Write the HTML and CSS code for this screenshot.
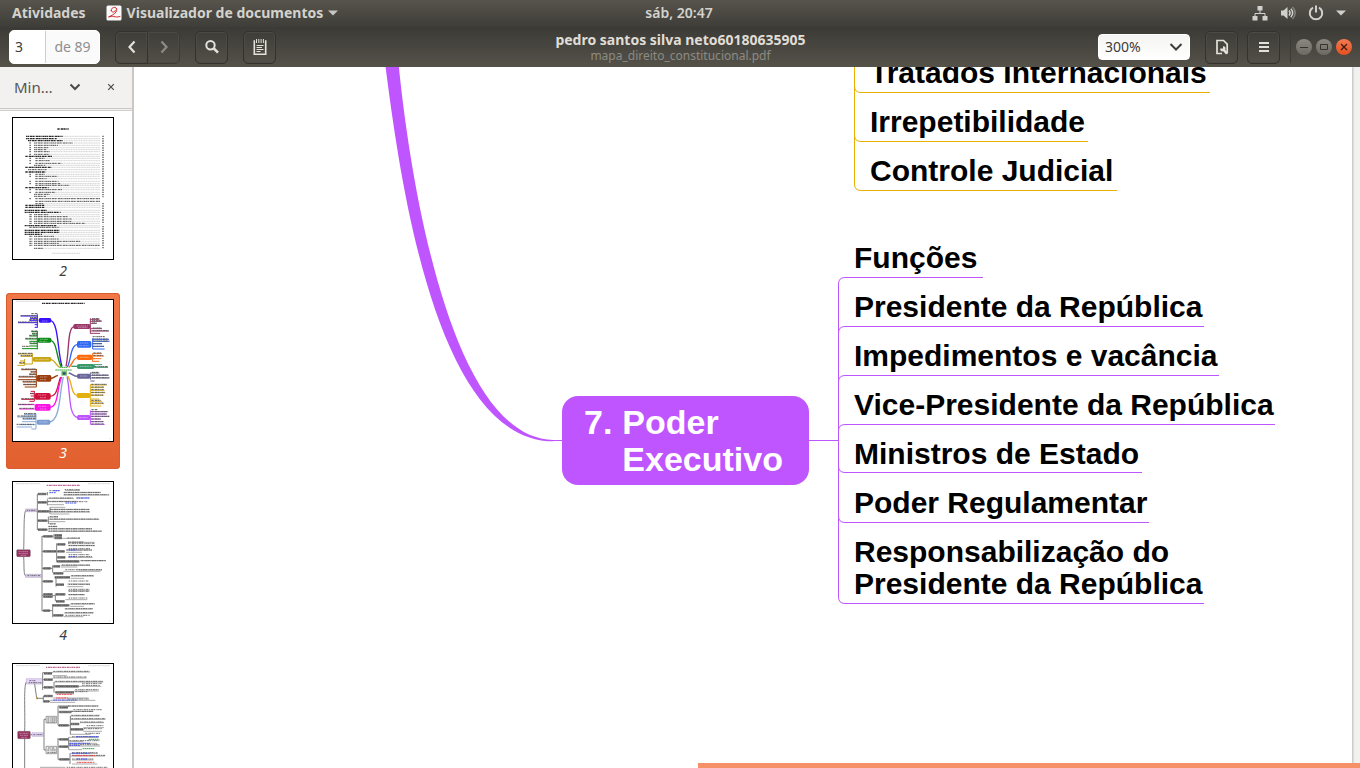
FILE: index.html
```html
<!DOCTYPE html>
<html lang="pt-BR">
<head>
<meta charset="utf-8">
<title>mapa_direito_constitucional.pdf</title>
<link rel="stylesheet" href="styles.css">
</head>
<body>
<header class="topbar">
  <div class="topbar-left">
    <button class="bar-item" type="button">Atividades</button>
    <button class="bar-item app-menu" type="button">
      <svg class="app-icon" width="16" height="16" viewBox="0 0 16 16" aria-hidden="true"><rect x=".5" y=".5" width="15" height="15" rx="1.500" fill="#fafafa"/><path d="M5.200 5.800C5 3.300 7 2.200 8.800 2.400C11 2.700 11.300 5 10 7C8.500 9.200 5.500 10.800 2.800 11.800M5.200 5.800C6 8 9 7.400 9.300 5.500M3 12C6 9.800 9 13.200 14 11.500" fill="none" stroke="#d8242e" stroke-linecap="round"/></svg>
      <span>Visualizador de documentos</span>
      <svg width="10" height="6" viewBox="0 0 10 6" aria-hidden="true"><path d="M0 .5H10L5 5.500Z" fill="#c8c6c2"/></svg>
    </button>
  </div>
  <button class="bar-item clock" type="button">sáb, 20:47</button>
  <button class="bar-item tray" type="button" aria-label="Sistema">
    <svg width="16" height="16" viewBox="0 0 16 16" aria-hidden="true"><path d="M5.500 1h5v4.500h-5zM.5 11h5v4.500h-5zM10.500 11h5v4.500h-5z" fill="#d2d0cc"/><path d="M8 5v3.500M3 11.500V8.500H13V11.500" fill="none" stroke="#d2d0cc"/></svg>
    <svg width="16" height="16" viewBox="0 0 16 16" aria-hidden="true"><path d="M1 5.500H3.500L7.500 2V14L3.500 10.500H1Z" fill="#d2d0cc"/><path d="M9 5.500C10.300 7 10.300 9 9 10.500" fill="none" stroke="#d2d0cc" stroke-width="1.500"/><path d="M10.800 3.800C13 6.300 13 9.700 10.800 12.200" fill="none" stroke="#d2d0cc" stroke-width="1.500"/><path d="M12.500 2C16 5.500 16 10.500 12.500 14" fill="none" stroke="#84827c" stroke-width="1.500"/></svg>
    <svg width="16" height="16" viewBox="0 0 16 16" aria-hidden="true"><path d="M5 2.700A6.200 6.200 0 1 0 11 2.700" fill="none" stroke="#d2d0cc" stroke-width="2"/><path d="M8 .5V7.500" stroke="#d2d0cc" stroke-width="2"/></svg>
    <svg width="10" height="6" viewBox="0 0 10 6" aria-hidden="true"><path d="M0 .5H10L5 5.500Z" fill="#d2d0cc"/></svg>
  </button>
</header>

<div class="headerbar">
  <div class="tools">
    <div class="page-box">
      <input class="page-input" type="text" value="3" aria-label="Página">
      <span class="page-total">de 89</span>
    </div>
    <div class="nav-group">
      <button class="tool" type="button" aria-label="Página anterior"><svg width="16" height="16" viewBox="0 0 16 16"><path d="M10.500 2.500L5.500 8L10.500 13.500" fill="none" stroke="#e4e1d8" stroke-width="2.200"/></svg></button>
      <button class="tool tool-next" type="button" aria-label="Próxima página" disabled><svg width="16" height="16" viewBox="0 0 16 16"><path d="M5.500 2.500L10.500 8L5.500 13.500" fill="none" stroke="#8d8b83" stroke-width="2.200"/></svg></button>
    </div>
    <button class="tool" type="button" aria-label="Localizar"><svg width="16" height="16" viewBox="0 0 16 16"><circle cx="6.500" cy="6.200" r="4.200" fill="none" stroke="#e4e1d8" stroke-width="2"/><path d="M9.500 9.200L14 13.700" stroke="#e4e1d8" stroke-width="2.600"/></svg></button>
    <button class="tool" type="button" aria-label="Anotações"><svg width="16" height="18" viewBox="0 0 16 18"><path d="M3 3H2.300V16.200H13.700V3H13" fill="none" stroke="#e4e1d8" stroke-width="1.600"/><path d="M4.500 1V5M6.800 1V5M9.100 1V5M11.400 1V5" stroke="#e4e1d8"/><path d="M4.500 7.500H11.500M4.500 9.500H10M4.500 11.500H11.500M4.500 13.500H8.500" stroke="#e4e1d8"/></svg></button>
  </div>
  <div class="titles">
    <h1 class="title">pedro santos silva neto60180635905</h1>
    <p class="subtitle">mapa_direito_constitucional.pdf</p>
  </div>
  <div class="tools tools-end">
    <div class="zoom-box">
      <select class="zoom-select" aria-label="Zoom"><option>300%</option></select>
      <svg class="zoom-arrow" width="14" height="10" viewBox="0 0 14 10" aria-hidden="true"><path d="M1.500 2L7 7.500L12.500 2" fill="none" stroke="#3c3c3c" stroke-width="2"/></svg>
    </div>
    <div class="pair">
      <button class="tool" type="button" aria-label="Opções do arquivo"><svg width="16" height="16" viewBox="0 0 16 16"><path d="M8 14.500H3V1.500H9.500L13.200 5.200V14.500" fill="none" stroke="#e4e1d8" stroke-width="1.700"/><path d="M9 7.200V9.500H6.200C6 12 7.500 12.800 9.300 12.300L12 15.500L14 13.800L11.300 10.800C12.300 8.800 11 7 9 7.200Z" fill="#e4e1d8"/></svg></button>
      <button class="tool" type="button" aria-label="Menu"><svg width="16" height="16" viewBox="0 0 16 16"><path d="M3 4H13M3 8H13M3 12H13" stroke="#e4e1d8" stroke-width="2"/></svg></button>
    </div>
    <div class="window-buttons">
      <button class="wbtn" type="button" aria-label="Minimizar"><svg width="8" height="8" viewBox="0 0 8 8"><path d="M0 4.500H8" stroke="#35342f"/></svg></button>
      <button class="wbtn" type="button" aria-label="Maximizar"><svg width="8" height="8" viewBox="0 0 8 8"><path d="M.5 1.500H7.500V6.500H.5Z" fill="none" stroke="#35342f"/></svg></button>
      <button class="wbtn wbtn-close" type="button" aria-label="Fechar"><svg width="8" height="8" viewBox="0 0 8 8"><path d="M1 1L7 7M7 1L1 7" stroke="#3a1a0e" stroke-width="1.200"/></svg></button>
    </div>
  </div>
</div>

<div class="workspace">
  <aside class="sidebar">
    <div class="side-head">
      <button class="side-combo" type="button">Min…<svg width="12" height="8" viewBox="0 0 12 8" aria-hidden="true"><path d="M1.500 1.500L6 6L10.500 1.500" fill="none" stroke="#4a4a48" stroke-width="2"/></svg></button>
      <button class="side-close" type="button" aria-label="Fechar painel"><svg width="8" height="8" viewBox="0 0 8 8"><path d="M1.200 1.200L6.800 6.800M6.800 1.200L1.200 6.800" stroke="#4a4a48" stroke-width="1.200"/></svg></button>
    </div>
    <ol class="thumbs">
      <li class="thumb">
        <svg class="sheet" viewBox="39 39 300 423" aria-hidden="true">
          <path class="leader" d="M190 94H300M172 101H300M192 107H300M222 114H300M176 121H300M148 128H300M142 134H300M152 140H300M150 148H300M158 154H300M136 160H300M152 167H300M186 175H300M138 181H300M156 187H300M142 194H300M138 201H300M138 208H300M174 214H300M142 221H300M178 229H300M184 236H300M210 241H300M148 248H300M188 254H300M168 262H300M152 268H300M140 274H300M132 296H300M136 301H300M136 307H300M142 316H300M184 322H300M148 329H300M206 335H300M218 342H300M216 349H300M258 355H300M172 362H300M180 367H300M182 376H300M182 382H300M128 388H300M164 394H300M178 402H300M244 409H300M178 415H300M134 430H300M156 445H240"/>
          <path class="micro" d="M102 114H218M102 121H174M102 128H146M102 134H140M102 140H150M102 148H148M106 160H134M106 167H150M106 175H184M102 181H136M84 194H140M106 208H136M106 214H172M106 221H140M106 229H176M106 236H182M106 241H208M106 254H186M106 262H166M102 268H150M102 274H138M106 281H300M106 289H300M106 296H130M102 329H146M102 335H204M102 342H216M102 349H214M102 355H256M88 367H178M102 394H162M102 402H176M102 409H242M102 415H176M102 421H300M102 430H132M88 114H94M88 121H94M88 128H94M88 134H94M88 140H94M88 148H94M88 160H94M88 167H94M88 175H94M88 208H94M88 214H94M88 229H94M88 236H94M88 254H94M88 262H94M88 281H94M88 329H96M88 335H96M88 342H96M88 349H96M88 355H96M88 394H98M88 402H98M88 409H98M88 415H98M88 421H98"/>
          <path class="micro strong" d="M172 72H206M78 94H188M78 101H170M84 107H190M76 154H156M76 187H154M76 201H136M76 248H146M76 301H134M76 307H134M74 316H140M74 322H182M74 362H170M74 376H180M74 382H180M74 388H126"/>
          <path class="numbers" d="M309 92V277M309 294V358M309 363V432"/>
        </svg>
        <span class="thumb-label">2</span>
      </li>
      <li class="thumb thumb-current">
        <svg class="sheet" viewBox="39 45 300 423" aria-hidden="true">
          <path class="leader" d="M48 49H120"/><path class="micro strong" d="M126 55H254"/>
          <g fill="none" stroke-width="4">
            <path stroke="#3a10ff" d="M150 106C176 108 172 200 186 244"/><path stroke="#0b8a14" d="M150 166C172 168 168 216 184 246"/><path stroke="#c9a414" d="M150 223C166 224 168 244 180 247"/><path stroke="#9a3c0c" d="M150 280C164 280 164 272 174 272"/><path stroke="#d0103c" d="M150 334C174 332 172 300 182 276"/><path stroke="#fb12e4" d="M150 367C176 364 170 310 185 276"/><path stroke="#8cabd8" d="M148 411C182 408 178 320 190 276"/>
            <path stroke="#9a3568" d="M222 125C202 128 208 200 198 244"/><path stroke="#2f68f4" d="M234 178C210 180 214 226 202 246"/><path stroke="#ff6a0c" d="M234 217C218 218 218 240 206 247"/><path stroke="#38986a" d="M234 244H214"/><path stroke="#686499" d="M234 274C218 274 218 266 206 264"/><path stroke="#e3b012" d="M234 332C212 330 218 296 204 274"/><path stroke="#bf55ff" d="M234 398C204 394 212 320 201 274"/>
          </g>
          <g>
            <rect x="116" y="99" width="38" height="14" rx="5" fill="#3a10ff"/><rect x="112" y="158" width="42" height="15" rx="5" fill="#0b8a14"/><rect x="98" y="216" width="56" height="14" rx="5" fill="#c9a414"/><rect x="110" y="270" width="44" height="20" rx="5" fill="#9a3c0c"/><rect x="104" y="324" width="48" height="20" rx="5" fill="#d0103c"/><rect x="104" y="357" width="48" height="20" rx="5" fill="#fb12e4"/><rect x="110" y="404" width="41" height="15" rx="5" fill="#7a9bd0"/>
            <rect x="220" y="117" width="51" height="15" rx="5" fill="#9a3568"/><rect x="231" y="168" width="43" height="20" rx="5" fill="#2f68f4"/><rect x="231" y="209" width="46" height="16" rx="5" fill="#ff6a0c"/><rect x="231" y="237" width="52" height="15" rx="5" fill="#38986a"/><rect x="231" y="266" width="40" height="15" rx="5" fill="#686499"/><rect x="230" y="324" width="41" height="15" rx="5" fill="#e3b012"/><rect x="231" y="390" width="40" height="15" rx="5" fill="#bf55ff"/>
          </g>
          <path class="micro light" d="M126 108H142M120 163H144M118 169H140M106 223H146M120 276H142M120 284H138M114 330H140M120 338H138M114 364H140M120 372H140M118 411H142M230 123H264M234 128H262M240 174H266M238 182H268M240 217H268M240 244H274M240 273H262M238 398H262"/>
          <g fill="none" stroke-width="3">
            <path stroke="#3a10ff" d="M112 88V128M62 93H112M90 100H112M88 106H112M54 113H112M104 119H112M104 127H112"/>
            <path stroke="#0b8a14" d="M112 138V193M94 140H112M96 147H112M88 153H112M76 162H112M88 169H112M90 176H112M88 183H112M66 191H112"/>
            <path stroke="#c9a414" d="M97 205V237M54 207H97M62 214H97M74 222V240M60 228H74M58 235H74M52 241H74M74 237H97"/>
            <path stroke="#9a3c0c" d="M109 252V306M64 254H109M92 261H109M88 268H109M56 276H109M54 284H109M68 291H109M70 299H109M74 306H109"/>
            <path stroke="#d0103c" d="M103 318V348M92 319H103M90 326H103M92 333H103M64 343H103M88 349H103"/>
            <path stroke="#fb12e4" d="M54 359H104M58 372H104"/>
            <path stroke="#8cabd8" d="M108 386V432M72 388H108M68 394H108M52 396H108M68 403H108M66 410H108M58 419H108M50 426H96M94 432H108"/>
            <path stroke="#9a3568" d="M271 100V146M271 103H298M271 109H305M271 115H290M271 131H306M271 138H327M271 145H300"/>
            <path stroke="#2f68f4" d="M278 160V192M278 163H327M278 169H328M278 176H306M278 184H312M278 192H314"/>
            <path stroke="#ff6a0c" d="M278 205V230M278 206H305M278 213H312M278 221H304M278 229H298"/>
            <path stroke="#38986a" d="M283 238V248M283 239H306M283 247H324"/>
            <path stroke="#686499" d="M271 263V284M271 264H298M271 271H326M271 279H328M271 288H284"/>
            <path stroke="#e3b012" d="M271 298V364M271 300H320M271 308H312M271 316H314M271 323H316M271 331H310M271 342H298M271 349H306M271 356H312M271 363H304"/>
            <path stroke="#bf55ff" d="M271 376V418M271 380H324M271 387H320M271 394H328M271 402H302M271 410H310M271 418H314"/>
          </g>
          <path class="micro" d="M94 86H112M62 92H112M90 98H112M88 104H112M54 111H112M94 138H112M96 145H112M88 151H112M76 160H112M88 174H112M66 184H88M54 205H97M62 212H97M58 233H74M64 252H108M92 260H108M88 267H108M56 274H108M68 289H108M70 298H108M90 325H103M64 341H103M54 358H102M58 370H102M72 386H108M52 393H108M68 400H108M50 418H102M276 101H298M276 107H304M276 114H290M278 129H304M278 137H327M278 155H314M278 162H327M278 168H328M278 176H306M278 184H312M280 204H304M280 212H310M284 245H324M276 262H296M276 270H326M276 278H328M274 298H320M274 306H312M274 314H312M274 322H314M274 330H310M274 346H302M274 354H310M274 374H292M274 380H322M274 387H320M274 394H328M274 402H302M274 410H310M274 417H312"/>
          <path d="M166 255H216M180 247H202" stroke="#39a340" stroke-width="3" stroke-dasharray="5 1"/><rect x="184" y="258" width="17" height="14" fill="#7bc46e"/><path d="M188 262H197V269H188Z" fill="#27477c"/>
          <path d="M327 461H331" stroke="#aaa"/>
        </svg>
        <span class="thumb-label">3</span>
      </li>
      <li class="thumb">
        <svg class="sheet" viewBox="39 36 300 423" aria-hidden="true">
          <path class="leader" d="M48 41H120M264 41H330"/>
          <path class="heading" d="M140 46H240"/>
          <path class="branch trunk" d="M71 238C73 200 70 122 78 122M71 260C73 290 70 318 78 318"/>
          <rect x="50" y="239" width="41" height="21" rx="3" fill="#94305f" stroke="#555"/><path class="micro light" d="M56 245H86M56 251H84M62 256H78"/>
          <path d="M77 117H111V125H77ZM77 313H123V322H77Z" fill="#e6d6fa" stroke="#6f6678"/>
          <path class="branch trunk" d="M112 122V72M112 122V180M126 318V198M126 318V424M112 72H142M112 97H142M112 124H150M112 152H142M112 179H142M126 199H160M126 244H170M126 295H158M126 334H160M126 377H166M126 422H158M142 66V76M142 88V106M150 112V132M145 140V162M162 192V206M170 220V274M158 286V308M168 324V350M166 370V394M158 402V442"/>
          <path class="boxes" d="M114 72H138M114 97H140M114 124H148M114 152H142M114 179H142M130 199H158M130 244H168M130 295H152M130 334H158M130 373H158M130 380H158M130 422H150M172 223H196M172 244H194M172 262H196M170 274H238M160 289H180M160 310H190M164 322H210M168 344H192M168 373H196M168 394H194M158 406H208M160 436H190M164 196H186M164 204H186"/>
          <path class="fine" d="M80 121H108M82 317H120M114 72H138M114 97H140M114 124H148M114 152H142M114 179H142M130 199H158M130 244H168M130 295H152M130 334H158M130 373H158M130 380H158M130 422H150M172 223H196M172 244H194M172 262H196M170 274H238M160 289H180M160 310H190M164 322H210M168 344H192M168 373H196M168 394H194M158 406H208M160 436H190M164 196H186M164 204H186"/>
          <path class="branch" d="M196 61H240M190 68H302M190 75H328M142 85H222M228 84H270M142 94H232M142 104H192M150 112H196M152 119H268M152 126H270M152 132H208M146 141H174M146 148H298M146 155H196M146 161H168M144 170H172M144 177H276M144 184H306M186 205H240M204 217H284M204 226H284M198 240H276M198 247H246M204 262H278M240 272H318M182 286H270M182 291H232M236 300H306M190 304H302M212 318H282M212 325H252M202 342H270M202 350H250M204 362H268M204 374H254M196 389H262M210 402H284M210 409H252M194 417H278M192 429H280M192 440H250"/>
          <path class="fine" d="M148 62H180M194 59H240M192 67H302M192 74H326M148 84H220M144 95H262M150 118H268M150 125H268M150 140H174M150 147H296M150 162H166M146 169H172M146 176H276M146 183H304M202 204H240M204 216H252M204 220H284M206 227H284M206 236H270M200 240H276M206 254H268M206 260H278M244 272H318M186 285H270M196 299H306M214 317H282M206 333H266M206 343H270M206 358H268M206 364H268M206 374H254M206 384H262M214 401H284M196 416H278M196 428H280M196 436H270"/>
          <path class="blue" d="M160 62H180M148 68H168M230 84H268M196 99H230M206 240H230M206 260H226"/>
          <path d="M327 452H331" stroke="#aaa"/>
        </svg>
        <span class="thumb-label">4</span>
      </li>
      <li class="thumb">
        <svg class="sheet" viewBox="39 72 300 423" aria-hidden="true">
          <path class="leader" d="M48 77H120M264 77H330"/>
          <path class="heading" d="M138 82H242"/>
          <path class="branch trunk" d="M74 274C76 220 70 130 80 125M74 296V495M92 284H98M104 132L110 174"/>
          <rect x="53" y="274" width="38" height="22" rx="3" fill="#94305f" stroke="#555"/><path class="micro light" d="M58 280H86M60 286H84M64 292H80"/>
          <path d="M79 116H128V132H79ZM96 278H130V289H96Z" fill="#e6d6fa" stroke="#8a70a0"/>
          <path d="M108 171H114V178H108Z" fill="#d3aa44"/>
          <path class="branch trunk" d="M128 124V98M128 124V150M128 98H158M128 119H158M128 142H162M162 126V158M110 175H130M130 168V188M130 168H158M130 184H150M132 284V238M132 284V330M132 238H140M132 330H140M174 238V198M174 238V256M174 330V294M174 330V358M174 198H208M174 216H214M174 256H210M211 228V284M174 298H206M174 320H204M174 358H210M206 292V328M210 340V372"/>
          <path d="M138 229H170V249H138ZM138 319H170V341H138Z" fill="#eee" stroke="#777" stroke-width="2"/>
          <path class="boxes" d="M132 100H156M132 119H158M132 142H158M132 168H158M132 184H148M166 139H236M166 157H222M178 202H204M178 216H214M176 256H206M212 252H238M212 268H250M178 298H206M178 320H204M178 358H208"/>
          <path class="fine" d="M88 122H106M86 128H124M100 284H128M142 234H168M142 240H168M142 246H166M144 324H164M142 330H168M142 337H168M132 100H156M132 119H158M132 142H158M132 168H158M132 184H148M166 139H236M166 157H222M178 202H204M178 216H214M176 256H206M212 252H238M212 268H250M178 298H206M178 320H204M178 358H208"/>
          <path class="branch" d="M158 96H270M158 107H200M158 114H260M162 126H310M236 139H304M222 153H296M158 174H266M150 181H286M150 187H226M206 198H296M212 214H280M212 228H298M212 238H316M240 248H312M250 263H312M250 274H306M212 283H272M206 292H296M208 304H250M206 310H292M206 318H300M206 329H246M210 340H294M212 348H316M216 360H280M216 372H292M120 382H196"/>
          <path class="fine" d="M160 94H268M160 111H260M166 124H308M246 130H306M246 136H300M226 149H296M226 155H262M204 177H266M204 198H296M220 209H306M214 214H280M214 226H298M214 236H316M240 246H312M260 257H312M252 266H306M256 280H300M216 290H296M208 302H300M208 314H300M216 338H292M216 346H316M216 357H280M200 382H322"/>
          <path class="red" d="M170 163H220M168 174H204M218 347H286M230 367H284"/>
          <path class="blue" d="M160 180H230M228 290H296M208 310H270M208 316H240M216 340H270M230 357H262"/>
          <path class="green" d="M266 298H298M248 326H284"/>
        </svg>
      </li>
    </ol>
  </aside>

  <main class="document">
    <div class="page">
      <svg class="lines" width="1218" height="701" viewBox="134 67 1218 701" aria-hidden="true">
        <g transform="translate(370 60) scale(.33333)" fill="#bf55ff"><path d="M46 15C95 400 205 1143 550 1144V1140C250 1136 125 400 86 15Z"/></g>
        <path d="M550 440.500H562M809 440.500H838" stroke="#bf55ff"/>
        <path d="M983 277.500H845Q838.500 277.500 838.500 284V597Q838.500 603.500 845 603.500H1204M838.500 333Q838.500 326.500 845 326.500H1204M838.500 382Q838.500 375.500 845 375.500H1219M838.500 431Q838.500 424.500 845 424.500H1275M838.500 466Q838.500 472.500 845 472.500H1142M838.500 516Q838.500 522.500 845 522.500H1149" fill="none" stroke="#bf55ff"/>
        <path d="M854.500 60V184Q854.500 190.500 861 190.500H1117M854.500 86Q854.500 92.500 861 92.500H1210M854.500 135Q854.500 141.500 861 141.500H1088" fill="none" stroke="#e8b000"/>
      </svg>
      <ul class="topics topics-upper">
        <li>Tratados Internacionais</li>
        <li>Irrepetibilidade</li>
        <li>Controle Judicial</li>
      </ul>
      <h2 class="node"><span>7.</span><span>Poder<br>Executivo</span></h2>
      <ul class="topics topics-lower">
        <li>Funções</li>
        <li>Presidente da República</li>
        <li>Impedimentos e vacância</li>
        <li>Vice-Presidente da República</li>
        <li>Ministros de Estado</li>
        <li>Poder Regulamentar</li>
        <li>Responsabilização do<br>Presidente da República</li>
      </ul>
    </div>
    <div class="hscroll"></div>
  </main>
</div>
</body>
</html>
```
FILE: styles.css
```css
* { box-sizing: border-box; }

body {
  margin: 0;
  height: 100vh;
  display: flex;
  flex-direction: column;
  overflow: hidden;
  font-family: "Noto Sans", "Open Sans", sans-serif;
  font-size: 14px;
  color: #3c3c3c;
}

button, input, select { font: inherit; color: inherit; margin: 0; }
button { padding: 0; border: 0; background: none; }
svg { display: block; flex: none; }

.topbar {
  flex: none;
  height: 27px;
  display: grid;
  grid-template-columns: 1fr auto 1fr;
  align-items: center;
  padding: 0 14px 1px 12px;
  background: linear-gradient(#57544c, #3e3d38);
  color: #d4d2cd;
}
.topbar-left { display: flex; gap: 20px; }
.bar-item {
  display: flex;
  align-items: center;
  font-weight: 700;
  line-height: 20px;
}
.clock { font-weight: 600; }
.app-menu { gap: 5px; }
.tray { justify-self: end; gap: 12px; }

.headerbar {
  flex: none;
  height: 40px;
  display: grid;
  grid-template-columns: 1fr auto 1fr;
  align-items: center;
  padding: 0 8px 0 9px;
  background: linear-gradient(#3b3a36, #55524a);
}
.tools { display: flex; align-items: center; gap: 15px; }
.tools-end { justify-content: flex-end; }
.page-box {
  display: flex;
  width: 91px;
  height: 34px;
  border: 1px solid #fff;
  border-radius: 5px;
  overflow: hidden;
  background: #fafafa;
}
.page-input {
  width: 36px;
  padding: 0 5px 2px;
  border: 0;
  border-right: 1px solid #cfcdca;
  background: #fff;
}
.page-total { flex: 1; line-height: 31px; text-align: center; color: #8f8f8f; }
.nav-group { display: flex; }
.tool {
  width: 33px;
  height: 33px;
  display: grid;
  place-items: center;
  border: 1px solid #33322e;
  border-radius: 5px;
  box-shadow: inset 0 0 0 1px #4c4a44;
}
.nav-group .tool:first-child { border-radius: 5px 0 0 5px; }
.nav-group .tool-next { width: 32px; border-left: 0; border-radius: 0 5px 5px 0; border-color: #3c3b36; }

.titles { text-align: center; line-height: 16px; }
.title { margin: 0; font-size: 14px; font-weight: 700; color: #e0ddd5; }
.subtitle { margin: 0; font-size: 12px; line-height: 15px; color: #8d8b83; }

.zoom-box { position: relative; }
.zoom-select {
  display: block;
  width: 92px;
  height: 26px;
  padding: 0 6px 1px;
  border: 1px solid #fff;
  border-radius: 4px;
  background: linear-gradient(#f4f4f3, #fff);
  appearance: none;
}
.zoom-arrow { position: absolute; right: 7px; top: 8px; pointer-events: none; }
.pair { display: flex; gap: 9px; }
.window-buttons {
  display: flex;
  gap: 4px;
  padding: 8px 0 8px 5px;
  border-left: 1px solid #3c3b36;
  margin-left: -5px;
}
.wbtn {
  width: 16px;
  height: 16px;
  display: grid;
  place-items: center;
  border-radius: 8px;
  background: linear-gradient(#8a8880, #6c6a63);
}
.wbtn-close { background: linear-gradient(#f47a52, #e4501f); }

.workspace { flex: 1; min-height: 0; display: flex; }

.sidebar {
  flex: none;
  width: 134px;
  display: flex;
  flex-direction: column;
  overflow: hidden;
  border-right: 2px solid #c9c8c7;
  background: #fff;
}
.side-head {
  flex: none;
  height: 44px;
  display: flex;
  align-items: center;
  padding: 0 17px 4px 14px;
  border-bottom: 1px solid #d0cfcd;
  background: linear-gradient(#f2f1f0 41px, #c9c8c7 41px 42px, #f2f1f0 42px);
}
.side-combo { flex: 1; display: flex; align-items: center; gap: 16px; color: #555; font-size: 15px; }
.thumbs {
  display: flex;
  flex-direction: column;
  gap: 6px;
  margin: 0;
  padding: 0 12px 0 6px;
  list-style: none;
}
.thumb {
  height: 176px;
  flex: none;
  display: flex;
  flex-direction: column;
  align-items: center;
  padding-top: 6px;
  border-radius: 4px;
}
.thumb-current {
  background: linear-gradient(#f17746, #e2602f);
  box-shadow: inset 0 0 0 1px #d95c2c;
  color: #fff;
}
.thumb-label { font-style: italic; line-height: 21px; }
.sheet { width: 102px; height: 143px; border: 1px solid #000; background: #fff; fill: none; }
.leader { stroke: #c0c0c0; stroke-width: 2; stroke-dasharray: 4 1; }
.micro { stroke: #555; stroke-width: 3; stroke-dasharray: 5 1 3 2 7 1; }
.strong { stroke: #2a2a2a; stroke-width: 4; }
.light { stroke: #fff; stroke-width: 2; opacity: .6; }
.numbers { stroke: #777; stroke-width: 5; stroke-dasharray: 4 3; }
.heading { stroke: #c06a96; stroke-width: 4; stroke-dasharray: 4 2 7 1; }
.branch { stroke: #808080; stroke-width: 2; }
.trunk { stroke-width: 3; }
.boxes { stroke: #8a8a8a; stroke-width: 8; }
.fine { stroke: #333; stroke-width: 2; stroke-dasharray: 5 2 3 2 7 1; }
.red { stroke: #f04a4a; stroke-width: 3; stroke-dasharray: 5 1 8 2; }
.blue { stroke: #4654f2; stroke-width: 3; stroke-dasharray: 6 1 4 2; }
.green { stroke: #3aa34a; stroke-width: 3; stroke-dasharray: 5 1; }

.document {
  flex: 1;
  min-width: 0;
  position: relative;
  overflow: hidden;
  padding-right: 8px;
  background: #f2f1f0;
}
.page {
  position: relative;
  height: 100%;
  overflow: hidden;
  background: #fff;
  box-shadow: 1px 0 2px #bbb;
  color: #000;
  font-family: "Liberation Sans", Arial, sans-serif;
  font-weight: 700;
}
.topics {
  position: absolute;
  display: flex;
  flex-direction: column;
  gap: 17px;
  margin: 0;
  padding: 0;
  list-style: none;
  font-size: 30px;
  line-height: 32px;
  white-space: nowrap;
}
.topics-upper { left: 736px; top: -10px; }
.topics-lower { left: 720px; top: 175px; }
.node {
  position: absolute;
  left: 428px;
  top: 329px;
  display: flex;
  gap: 10px;
  width: 247px;
  margin: 0;
  padding: 8px 22px 7px;
  border-radius: 16px;
  background: #bf55ff;
  color: #fff;
  font-size: 34px;
  line-height: 37px;
}
.hscroll {
  position: absolute;
  right: 0;
  bottom: 0;
  width: 54%;
  height: 5px;
  background: #f59067;
}
```
